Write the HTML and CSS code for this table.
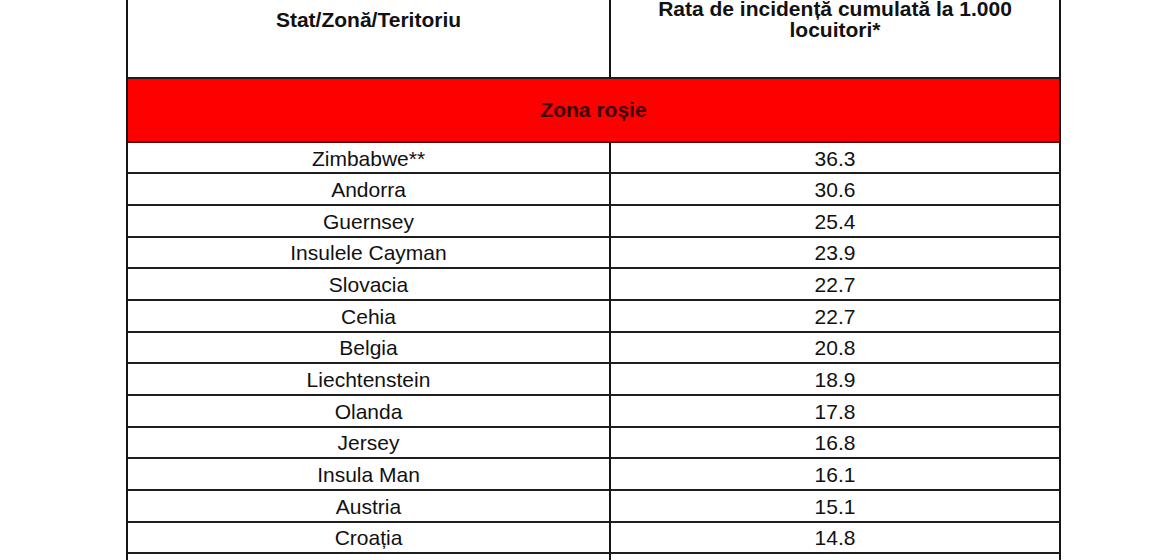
FILE: index.html
```html
<!DOCTYPE html>
<html lang="ro">
<head>
<meta charset="utf-8">
<title>Zona roșie</title>
<link rel="stylesheet" href="styles.css">
</head>
<body>
<div class="sheet">
  <div class="row head">
    <div class="cell">Stat/Zonă/Teritoriu</div>
    <div class="cell">Rata de incidență cumulată la 1.000<br>locuitori*</div>
  </div>
  <div class="row zone">
    <div class="cell span">Zona roșie</div>
  </div>
  <div class="row data"><div class="cell">Zimbabwe**</div><div class="cell">36.3</div></div>
  <div class="row data"><div class="cell">Andorra</div><div class="cell">30.6</div></div>
  <div class="row data"><div class="cell">Guernsey</div><div class="cell">25.4</div></div>
  <div class="row data"><div class="cell">Insulele Cayman</div><div class="cell">23.9</div></div>
  <div class="row data"><div class="cell">Slovacia</div><div class="cell">22.7</div></div>
  <div class="row data"><div class="cell">Cehia</div><div class="cell">22.7</div></div>
  <div class="row data"><div class="cell">Belgia</div><div class="cell">20.8</div></div>
  <div class="row data"><div class="cell">Liechtenstein</div><div class="cell">18.9</div></div>
  <div class="row data"><div class="cell">Olanda</div><div class="cell">17.8</div></div>
  <div class="row data"><div class="cell">Jersey</div><div class="cell">16.8</div></div>
  <div class="row data"><div class="cell">Insula Man</div><div class="cell">16.1</div></div>
  <div class="row data"><div class="cell">Austria</div><div class="cell">15.1</div></div>
  <div class="row data"><div class="cell">Croația</div><div class="cell">14.8</div></div>
  <div class="row data"><div class="cell"></div><div class="cell"></div></div>
</div>
</body>
</html>
```
FILE: styles.css
```css
html, body {
  margin: 0;
  padding: 0;
  background: #ffffff;
}

body {
  font-family: "Liberation Sans", Arial, sans-serif;
  color: #111111;
  overflow: hidden;
  height: 560px;
}

.sheet {
  margin-left: 126px;
  margin-top: -38px;
  width: 935px;
  border-left: 2px solid #151515;
  border-top: 2px solid #151515;
  box-sizing: border-box;
}

.row {
  display: grid;
  grid-template-columns: 483px 450px;
}

.cell {
  box-sizing: border-box;
  border-right: 2px solid #151515;
  border-bottom: 2px solid #1e1e1e;
  display: flex;
  align-items: center;
  justify-content: center;
  text-align: center;
}

.head {
  height: 114.7px;
}

.head .cell {
  font-weight: bold;
  font-size: 21px;
  line-height: 21.5px;
  padding-bottom: 2px;
}

.zone {
  height: 64px;
}

.zone .span {
  grid-column: 1 / 3;
  background: #fe0000;
  border-bottom-color: #5a0a0a;
  font-weight: bold;
  font-size: 21px;
  color: #3c0000;
  padding-top: 0;
}

.data {
  height: 31.66px;
}

.data .cell {
  font-size: 21px;
  line-height: 24px;
  padding-top: 2px;
}
```
